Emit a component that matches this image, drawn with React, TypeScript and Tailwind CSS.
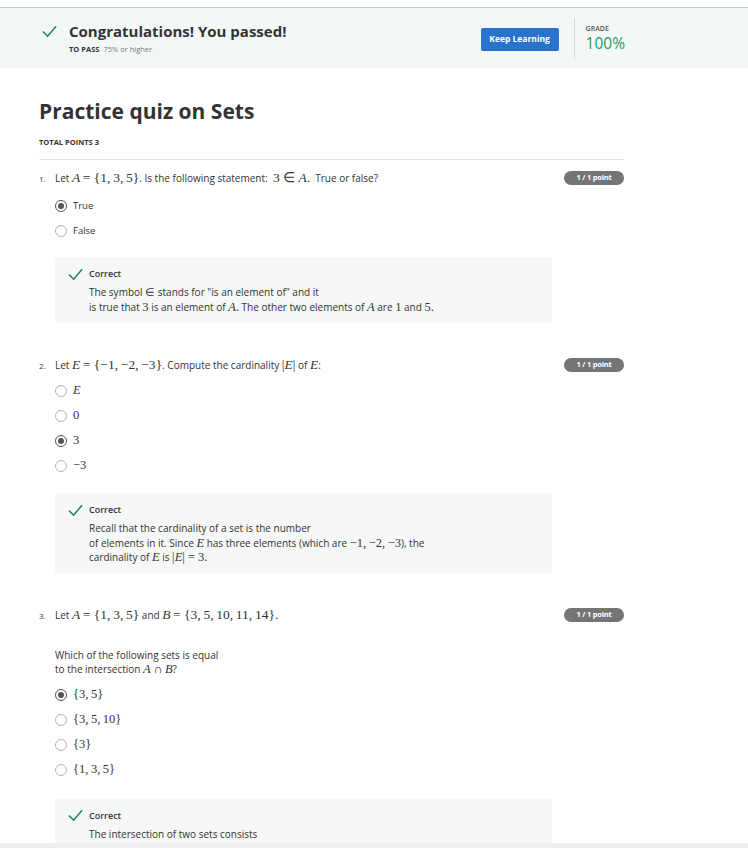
import React from "react";

const T = "\u2009";

const M = ({ children, i = false, s = "" }: { children: React.ReactNode; i?: boolean; s?: string }) => (
  <span className={`font-['Liberation_Serif',serif] leading-none ${i ? "italic" : ""} ${s || "text-[12.5px]"}`}>{children}</span>
);

const Q = ({ children, i = false }: { children: React.ReactNode; i?: boolean }) => (
  <M i={i} s="text-[13.5px]">{children}</M>
);

const Check = ({ size = 15 }: { size?: number }) => (
  <svg width={size} height={size} viewBox="0 0 16 16" fill="none">
    <path d="M1.5 8.5 L6 13 L14.5 3" stroke="#1f8354" strokeWidth="1.6" strokeLinecap="square" />
  </svg>
);

const Radio = ({ checked, children }: { checked?: boolean; children: React.ReactNode }) => (
  <div className="flex items-center h-[25px]">
    <span
      className={`w-[12px] h-[12px] rounded-full flex items-center justify-center ${
        checked ? "border-[1.5px] border-[#555]" : "border border-[#b5b5b5]"
      }`}
    >
      {checked && <span className="w-[6px] h-[6px] rounded-full bg-[#555]" />}
    </span>
    <span className="ml-[6px] text-[9.5px] text-[#333] leading-[14px]">{children}</span>
  </div>
);

const Badge = () => (
  <span className="shrink-0 w-[60px] h-[14px] rounded-full bg-[#757575] text-white text-[7.5px] font-bold flex items-center justify-center tracking-[-0.2px]">
    1 / 1 point
  </span>
);

const Feedback = ({ children, cls = "" }: { children: React.ReactNode; cls?: string }) => (
  <div className={`ml-[16px] w-[497px] bg-[#f5f8f7] pt-[10px] pl-[13px] pb-[9px] ${cls}`}>
    <div className="flex items-center h-[14px]">
      <Check size={15} />
      <span className="ml-[6px] text-[9px] font-semibold text-[#333]">Correct</span>
    </div>
    <div className="ml-[21px] mt-[4px] text-[10px] leading-[14.5px] text-[#333]">{children}</div>
  </div>
);

const QHead = ({ n, children }: { n: string; children: React.ReactNode }) => (
  <div className="flex items-start justify-between h-[14px]">
    <div className="flex items-baseline text-[10px] leading-[14px] text-[#333]">
      <span className="w-[16px] text-[8px]">{n}</span>
      <span className="whitespace-pre">{children}</span>
    </div>
    <Badge />
  </div>
);

export default function App() {
  return (
    <div className="min-h-[848px] bg-white font-['Open_Sans',sans-serif] text-[#333] relative overflow-hidden">
      <div className="h-[7px] bg-white" />
      <div className="h-[1px] bg-[#c8c8c8]" />
      <div className="h-[60px] bg-[#f3f8f7] flex">
        <div className="ml-[42px] pt-[13px] flex flex-col">
          <div className="flex items-center h-[20px]">
            <Check size={15} />
            <span className="ml-[12px] text-[15px] font-bold text-[#333] leading-[20px]">Congratulations! You passed!</span>
          </div>
          <div className="ml-[27px] mt-[3px] text-[7.5px] leading-[10px]">
            <span className="font-bold text-[#333]">TO PASS</span>
            <span className="ml-[4px] text-[#777]">75% or higher</span>
          </div>
        </div>
        <div className="ml-auto mr-[123px] flex items-center">
          <button className="w-[78px] h-[23px] mt-[3px] bg-[#2a73cc] rounded-[2px] text-white text-[8.5px] font-bold">
            Keep Learning
          </button>
          <div className="ml-[15px] w-[1px] h-[41px] bg-[#d8d8d8]" />
          <div className="ml-[11px] flex flex-col">
            <span className="text-[7px] font-semibold text-[#555] leading-[9px]">GRADE</span>
            <span className="text-[15.5px] text-[#2a9a5e] leading-[18px] mt-[1px]">100%</span>
          </div>
        </div>
      </div>

      <div className="ml-[39px] w-[585px]">
        <h1 className="mt-[29px] text-[21px] font-bold text-[#333] leading-[28px]">Practice quiz on Sets</h1>
        <div className="mt-[12px] text-[7.5px] font-bold text-[#333] leading-[10px]">TOTAL POINTS 3</div>
        <div className="mt-[12px] h-[1px] bg-[#e1e1e1]" />

        {/* Q1 */}
        <div className="mt-[11px]">
          <QHead n="1.">
            Let <Q i>A</Q> <Q>= {"{"}1,{T}3,{T}5{"}"}</Q>. Is the following statement:{"  "}<Q>3 ∈ </Q><Q i>A</Q><Q>.</Q>{"  "}True or false?
          </QHead>
          <div className="ml-[16px] mt-[8px]">
            <Radio checked>True</Radio>
            <Radio>False</Radio>
          </div>
          <div className="mt-[14px]">
            <Feedback>
              <div>The symbol <M s="text-[11px]">∈</M> stands for "is an element of" and it</div>
              <div>
                is true that <M>3</M> is an element of <M i>A</M><M>.</M> The other two elements of <M i>A</M> are <M>1</M> and <M>5</M><M>.</M>
              </div>
            </Feedback>
          </div>
        </div>

        {/* Q2 */}
        <div className="mt-[35px]">
          <QHead n="2.">
            Let <Q i>E</Q> <Q>= {"{"}−1,{T}−2,{T}−3{"}"}</Q>. Compute the cardinality <Q>|</Q><Q i>E</Q><Q>|</Q> of <Q i>E</Q>:
          </QHead>
          <div className="ml-[16px] mt-[6px]">
            <Radio><M i>E</M></Radio>
            <Radio><M>0</M></Radio>
            <Radio checked><M>3</M></Radio>
            <Radio><M>−3</M></Radio>
          </div>
          <div className="mt-[15px]">
            <Feedback>
              <div>Recall that the cardinality of a set is the number</div>
              <div>
                of elements in it. Since <M i>E</M> has three elements (which are <M>−1,{T}−2,{T}−3</M>), the
              </div>
              <div>
                cardinality of <M i>E</M> is <M>|</M><M i>E</M><M>| = 3.</M>
              </div>
            </Feedback>
          </div>
        </div>

        {/* Q3 */}
        <div className="mt-[34px]">
          <QHead n="3.">
            Let <Q i>A</Q> <Q>= {"{"}1,{T}3,{T}5{"}"}</Q> and <Q i>B</Q> <Q>= {"{"}3,{T}5,{T}10,{T}11,{T}14{"}"}.</Q>
          </QHead>
          <div className="ml-[16px] mt-[26px] text-[10px] leading-[14px] text-[#333]">
            <div>Which of the following sets is equal</div>
            <div>to the intersection <M i>A</M> <M>∩</M> <M i>B</M>?</div>
          </div>
          <div className="ml-[16px] mt-[7px]">
            <Radio checked><M>{"{"}3,{T}5{"}"}</M></Radio>
            <Radio><M>{"{"}3,{T}5,{T}10{"}"}</M></Radio>
            <Radio><M>{"{"}3{"}"}</M></Radio>
            <Radio><M>{"{"}1,{T}3,{T}5{"}"}</M></Radio>
          </div>
          <div className="mt-[16px]">
            <Feedback cls="h-[60px]">
              <div>The intersection of two sets consists</div>
            </Feedback>
          </div>
        </div>
      </div>
      <div className="fixed left-0 right-0 bottom-0 h-[5px] bg-[#efefef]" />
    </div>
  );
}
